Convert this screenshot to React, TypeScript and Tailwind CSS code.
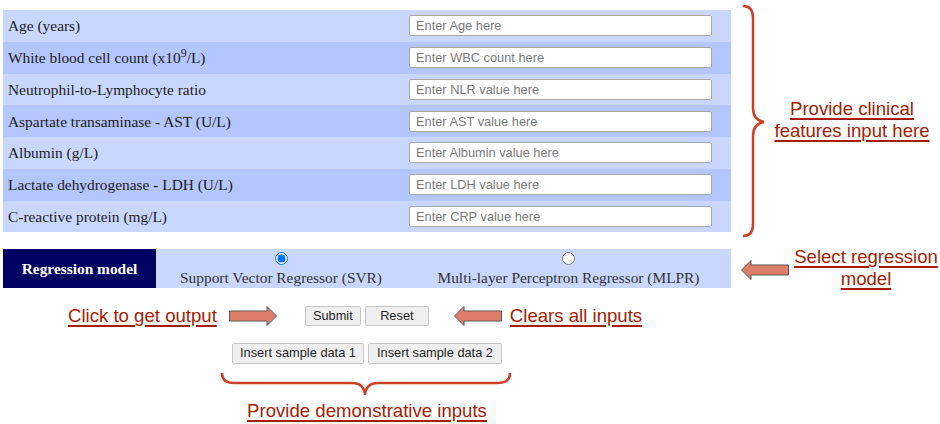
import React from "react";

const fields = [
  { label: "Age (years)", placeholder: "Enter Age here" },
  { label: "White blood cell count (x10", sup: "9", tail: "/L)", placeholder: "Enter WBC count here" },
  { label: "Neutrophil-to-Lymphocyte ratio", placeholder: "Enter NLR value here" },
  { label: "Aspartate transaminase - AST (U/L)", placeholder: "Enter AST value here" },
  { label: "Albumin (g/L)", placeholder: "Enter Albumin value here" },
  { label: "Lactate dehydrogenase - LDH (U/L)", placeholder: "Enter LDH value here" },
  { label: "C-reactive protein (mg/L)", placeholder: "Enter CRP value here" },
];

function BlockArrow({ dir }: { dir: "left" | "right" }) {
  const pts =
    dir === "right"
      ? "0.5,5 38,5 38,0.5 47.5,10 38,19.5 38,15 0.5,15"
      : "47.5,5 10,5 10,0.5 0.5,10 10,19.5 10,15 47.5,15";
  return (
    <svg width="48" height="20" viewBox="0 0 48 20" className="block shrink-0">
      <polygon points={pts} fill="#dd7e6b" stroke="#595959" strokeWidth="1" />
    </svg>
  );
}

function Note({ children, className = "" }: { children: React.ReactNode; className?: string }) {
  return (
    <div
      className={`font-['Liberation_Sans',Arial,sans-serif] text-[18.6px] leading-[22px] text-[#a61c00] underline underline-offset-[3px] decoration-[1.5px] text-center whitespace-nowrap ${className}`}
    >
      {children}
    </div>
  );
}

const btn =
  "h-[20px] bg-[#efefef] border border-[#c6c6c6] rounded-[2px] text-[12.8px] text-[#1f1f1f] font-['Liberation_Sans',Arial,sans-serif] leading-none";

export default function App() {
  return (
    <div className="w-[940px] h-[424px] bg-white pt-[10px] pl-[3px] font-['Liberation_Serif','Times_New_Roman',serif] overflow-hidden">
      {/* Feature table + brace note */}
      <div className="flex items-start">
        <div className="w-[728px] shrink-0">
          {fields.map((f, i) => (
            <div
              key={i}
              className={`h-[31.75px] flex items-center justify-between pl-[5px] pr-[19px] ${
                i % 2 === 0 ? "bg-[#c9d7fe]" : "bg-[#b3c6fd]"
              }`}
            >
              <span className="text-[15.4px] text-[#1c1c1c]">
                {f.label}
                {f.sup && <sup className="text-[12px]">{f.sup}</sup>}
                {f.tail}
              </span>
              <input
                type="text"
                placeholder={f.placeholder}
                className="w-[303px] h-[21px] bg-white border border-[#a8a8a8] rounded-[2px] px-[6px] text-[12.8px] font-['Liberation_Sans',Arial,sans-serif] placeholder:text-[#7a7a7a] outline-none"
              />
            </div>
          ))}
        </div>
        <svg width="26" height="234" viewBox="0 0 26 234" className="block shrink-0 ml-[10px] -mt-[6px] -mb-[10px]">
          <path
            d="M2 2 Q12 2 12 14 L12 104 Q12 116 23 118 Q12 120 12 132 L12 220 Q12 232 2 232"
            fill="none"
            stroke="#cc4125"
            strokeWidth="2.5"
          />
        </svg>
        <Note className="w-[160px] ml-[5px] mt-[88px]">
          Provide clinical
          <br />
          features input here
        </Note>
      </div>

      {/* Regression model selector */}
      <div className="flex items-start mt-[17px]">
        <div className="w-[728px] h-[39px] shrink-0 flex bg-[#c9d7fe]">
          <div className="w-[153px] bg-[#010161] flex items-center justify-center text-white font-bold text-[15.4px]">
            Regression model
          </div>
          <label className="w-[250px] flex flex-col items-center text-[15.4px] text-[#333]">
            <input type="radio" name="model" defaultChecked className="m-0 mt-[3px] w-[13px] h-[13px]" />
            <span className="leading-[18px] mt-[4px]">Support Vector Regressor (SVR)</span>
          </label>
          <label className="w-[325px] flex flex-col items-center text-[15.4px] text-[#333]">
            <input type="radio" name="model" className="m-0 mt-[3px] w-[13px] h-[13px]" />
            <span className="leading-[18px] mt-[4px]">Multi-layer Perceptron Regressor (MLPR)</span>
          </label>
        </div>
        <div className="ml-[10px] mt-[11px]">
          <BlockArrow dir="left" />
        </div>
        <Note className="w-[150px] ml-[3px] -mt-[3px] -mb-[10px]">
          Select regression
          <br />
          model
        </Note>
      </div>

      {/* Submit / Reset */}
      <div className="flex items-center mt-[17px] ml-[65px]">
        <Note>Click to get output</Note>
        <div className="ml-[12px]">
          <BlockArrow dir="right" />
        </div>
        <button className={`${btn} w-[56px] ml-[28px]`}>Submit</button>
        <button className={`${btn} w-[64px] ml-[4px]`}>Reset</button>
        <div className="ml-[25px]">
          <BlockArrow dir="left" />
        </div>
        <Note className="ml-[8px]">Clears all inputs</Note>
      </div>

      {/* Sample data */}
      <div className="w-[728px] flex justify-center gap-[4px] mt-[16px]">
        <button className={`${btn} h-[21px] w-[132px]`}>Insert sample data 1</button>
        <button className={`${btn} h-[21px] w-[134px]`}>Insert sample data 2</button>
      </div>

      <div className="w-[728px] flex flex-col items-center mt-[8px]">
        <svg width="292" height="25" viewBox="0 0 292 25" className="block -ml-[2px]">
          <path
            d="M2 1 Q2 11 14 11 L132 11 Q144 11 145 23 Q146 11 158 11 L278 11 Q290 11 290 1"
            fill="none"
            stroke="#cc4125"
            strokeWidth="2.5"
          />
        </svg>
        <Note className="mt-[3px]">Provide demonstrative inputs</Note>
      </div>
    </div>
  );
}
